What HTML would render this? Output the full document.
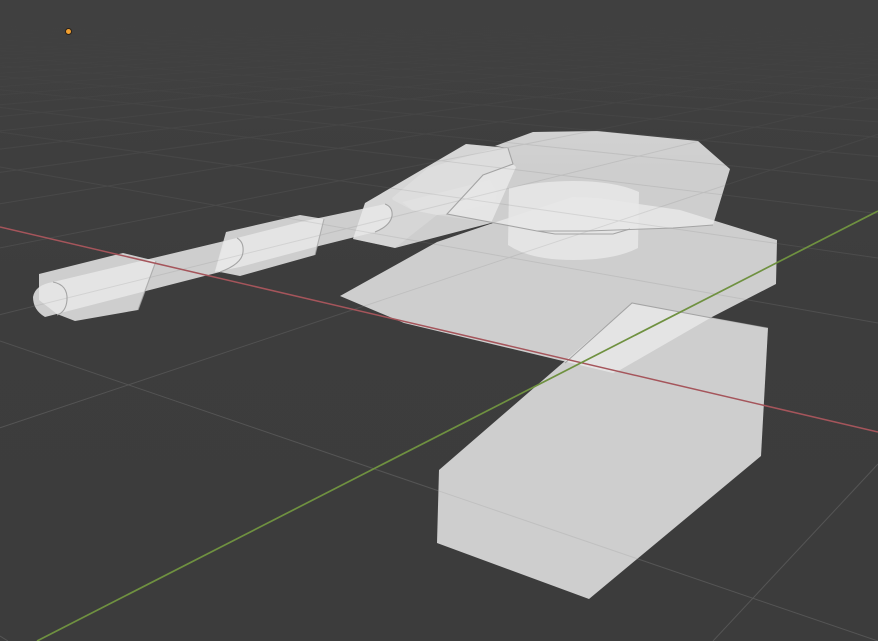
<!DOCTYPE html>
<html><head><meta charset="utf-8"><title>Viewport</title>
<style>html,body{margin:0;padding:0;background:#3c3c3c;width:878px;height:641px;overflow:hidden}svg{display:block;filter:blur(.35px)}</style>
</head><body>
<svg width="878" height="641" viewBox="0 0 878 641" xmlns="http://www.w3.org/2000/svg">
<defs>
<linearGradient id="bg" x1="0" y1="0" x2="0" y2="1"><stop offset="0" stop-color="#404040"/><stop offset=".45" stop-color="#3d3d3d"/><stop offset="1" stop-color="#3c3c3c"/></linearGradient>
<linearGradient id="fade" gradientUnits="userSpaceOnUse" x1="0" y1="0" x2="0" y2="641">
<stop offset="0" stop-color="#404040" stop-opacity="1"/><stop offset=".08" stop-color="#404040" stop-opacity=".95"/><stop offset=".2" stop-color="#3f3f3f" stop-opacity=".72"/><stop offset=".4" stop-color="#3d3d3d" stop-opacity=".38"/><stop offset=".65" stop-color="#3c3c3c" stop-opacity="0"/></linearGradient>
<linearGradient id="top" gradientUnits="userSpaceOnUse" x1="0" y1="131" x2="0" y2="170"><stop offset="0" stop-color="#fff" stop-opacity=".08"/><stop offset="1" stop-color="#fff" stop-opacity="0"/></linearGradient>
<path id="grid" d="M0,636L8,641M0,341L878,641M0,167L878,323M0,132L878,258M0,107.4L878,213.6M0,89.7L878,181.1M0,76.3L878,156.5M0,65.7L878,137.2M0,57.4L878,121.9M0,50.4L878,109.2M0,44.6L878,98.5M0,39.8L878,89.6M0,35.5L878,81.8M0,31.9L878,75.1M0,28.7L878,69.3M0,25.8L878,64.1M0,23.3L878,59.4M0,21.1L878,55.3M0,19L878,51.6M0,17.2L878,48.2M0,15.5L878,45.1M878,464L713,641M0,427.8L878,134.2M0,314.7L878,96.6M0,247.9L878,74.4M0,203.8L878,59.7M0,172.4L878,49.3M0,149.1L878,41.5M0,130.9L878,35.5M0,116.5L878,30.7M0,104.7L878,26.8M0,94.9L878,23.5M0,86.6L878,20.8M0,79.5L878,18.4M0,73.3L878,16.4M0,68L878,14.6M0,63.2L878,13M0,59L878,11.6M0,55.3L878,10.4M0,51.9L878,9.2M0,48.8L878,8.2"/>
<clipPath id="mesh">
<polygon points="340,296 404,323 613,373 620,370 712,317 776,284 777,240 680,210 598,198 573,197 490,224 437,242"/>
<polygon points="632,303 768,328 761,456 589,599 437,543 439,470"/>
<polygon points="495,146 533,132 597,131 698,141 730,169 713,225 673,228 587,231 537,231 447,214 483,175 513,164 508,148"/>
<polygon points="353,239 365,203 466,144 508,148 513,164 516,167 491,223 395,248"/>
<polygon points="39,274 123,253 156,261 138,310 75,321 57,314 39,300"/>
<polygon points="226,232 300,215 324,219 315,255 240,276 215,271"/>
<path d="M45,317Q33,310 33,297Q35,285 53,282L237,238L385,204L392,216L375,232L220,272Z"/>
</clipPath>
</defs>
<rect width="878" height="641" fill="url(#bg)"/>
<use href="#grid" fill="none" stroke="#555555" stroke-width="1"/>
<rect width="878" height="641" fill="url(#fade)"/>

<g fill="#e7e7e7" fill-opacity=".85">
<!-- hull -->
<polygon points="340,296 404,323 613,373 620,370 712,317 776,284 777,240 680,210 598,198 573,197 490,224 437,242"/>
<!-- track -->
<polygon points="632,303 768,328 761,456 589,599 437,543 439,470"/>
<!-- turret -->
<polygon points="495,146 533,132 597,131 698,141 730,169 713,225 673,228 587,231 537,231 447,214 483,175 513,164 508,148"/>
<!-- turret ring -->
<path d="M509,188Q540,181 573,181Q615,181 639,192L638,248Q615,260 573,260Q530,260 508,245Z"/>
<!-- housing -->
<polygon points="353,239 365,203 466,144 508,148 513,164 516,167 491,223 395,248"/>
<polygon points="353,239 365,203 466,144 508,148 513,164 516,167 491,223 437,215 395,248" fill-opacity=".3"/>
<polygon points="392,198 428,168 495,148 508,148 513,164 483,175 447,214 437,215 412,210 393,200" fill-opacity=".45"/>
<polygon points="402,202 490,180 497,193 495,203 447,214 437,215 412,210" fill-opacity=".35"/>
<!-- muzzle brake -->
<polygon points="39,274 123,253 156,261 138,310 75,321 57,314 39,300"/>
<!-- barrel front -->
<path d="M45,317Q33,310 33,297Q35,285 53,282L237,238Q244,242 243,252Q242,264 220,272Z"/>
<!-- mid housing -->
<polygon points="226,232 300,215 324,219 315,255 240,276 215,271"/>
<!-- barrel rear -->
<path d="M225,241L300,222L385,204Q393,207 392,216Q390,226 375,232L315,247L240,267L215,272Z"/>
</g>
<polygon points="495,146 533,132 597,131 698,141 730,169 513,170 508,148" fill="url(#top)"/>

<g clip-path="url(#mesh)"><use href="#grid" fill="none" stroke="#000" stroke-opacity=".08" stroke-width="1"/></g>

<g fill="none" stroke="#a4a4a4" stroke-width="1.1">
<path d="M53,282Q68,285 67,300Q66,312 57,315"/>
<path d="M237,238Q244,242 243,252Q242,264 220,272"/>
<path d="M385,204Q393,207 392,216Q390,226 375,232"/>
<path d="M156,261L138,310" stroke-opacity=".8"/>
<path d="M324,219L315,255" stroke-opacity=".8"/>
<path d="M508,148L513,164L483,175L447,214L537,231L587,231L673,228L713,225"/>
<path d="M537,231L555,234L613,234L630,229"/>
<path d="M565,363L632,303L712,318"/>
<path d="M712,318L768,328" stroke-opacity=".4"/>
</g>

<line x1="0" y1="227" x2="878" y2="432" stroke="#a5555b" stroke-width="1.5"/>
<line x1="37" y1="641" x2="878" y2="211" stroke="#6f9140" stroke-width="1.7"/>

<circle cx="68.5" cy="31.5" r="3" fill="#f2a02f" stroke="#2a2018" stroke-width="1"/>
</svg>
</body></html>
